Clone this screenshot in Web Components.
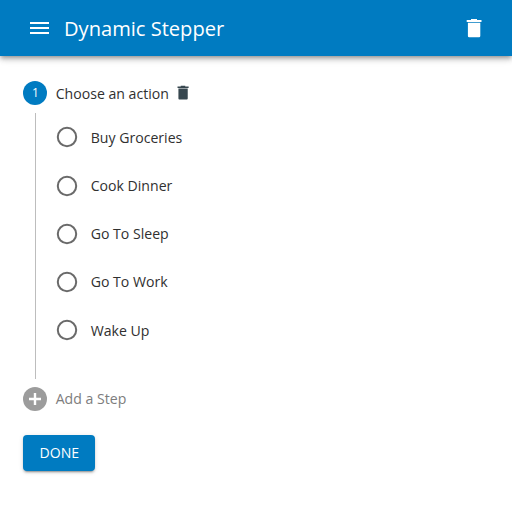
<!DOCTYPE html>
<html lang="en">
<head>
<meta charset="utf-8">
<title>Dynamic Stepper</title>
<style>
html,body{margin:0;background:#fff}
body{font-family:"Open Sans",sans-serif;font-size:14.100px;color:#303030;height:516px;overflow:hidden}
</style>
</head>
<body>
<stepper-page></stepper-page>
<script>
function define(name, html) {
  const t = document.createElement('template');
  t.innerHTML = html;
  customElements.define(name, class extends HTMLElement {
    constructor() {
      super();
      this.attachShadow({mode: 'open'}).append(t.content.cloneNode(true));
    }
  });
}

define('trash-icon', `
<style>:host{display:block;width:16px;height:20px}svg{display:block;width:100%;height:100%}</style>
<svg viewBox="0 0 16 20" fill="currentColor"><path d="M5 1h6v1H15.500v2.100H.700V2H5z"/><path d="M1.900 4.800h12.400V18a1.200 1.200 0 0 1-1.200 1.200H3.100a1.200 1.200 0 0 1-1.200-1.200z"/></svg>`);

define('app-bar', `
<style>
:host{display:flex;align-items:center;box-sizing:border-box;height:56px;padding:0 30px;background:#007bc1;color:#fff;
box-shadow:0 2px 4px -1px rgba(0,0,0,.3),0 4px 5px rgba(0,0,0,.14),0 1px 10px rgba(0,0,0,.12)}
svg{width:19px;height:14px;display:block}
h1{margin:0 0 0 15px;flex:1;font-size:20.100px;line-height:32px;font-weight:400;padding-top:2px}
</style>
<svg viewBox="0 0 19 14" fill="#fff"><path d="M0 1h19v2H0zM0 6h19v2H0zM0 11h19v2H0z"/></svg>
<h1><slot></slot></h1><trash-icon></trash-icon>`);

define('step-label', `
<style>
:host{display:flex;align-items:center;height:24px}
.badge{width:24px;height:24px;flex:none;margin-right:8.300px}
.t{line-height:20px;white-space:nowrap;padding-top:1px}
</style>
<div class="badge"><slot name="icon"></slot></div><span class="t"><slot></slot></span><slot name="action"></slot>`);

define('step-number', `
<style>:host{display:flex;align-items:center;justify-content:center;width:24px;height:24px;border-radius:50%;background:#007bc1;color:#fff;font-size:12px;line-height:24px}</style>
<slot></slot>`);

define('add-icon', `
<style>:host,svg{display:block;width:24px;height:24px}</style>
<svg viewBox="0 0 24 24"><circle cx="12" cy="12" r="12" fill="#9c9c9c"/><path d="M12 6v12M6 12h12" stroke="#fff" stroke-width="2.400"/></svg>`);

define('radio-option', `
<style>
:host{display:flex;align-items:center;height:48.200px}
svg{width:22px;height:22px;margin-right:13px;flex:none}
</style>
<svg viewBox="0 0 22 22"><circle cx="11" cy="11" r="9.200" fill="none" stroke="#6a6a6a" stroke-width="2"/></svg><span><slot></slot></span>`);

define('step-body', `
<style>:host{display:block;box-sizing:border-box;margin:8px 0 8px 12px;height:265.500px;border-left:1px solid #bdbdbd;padding-left:19.300px}</style>
<slot></slot>`);

define('done-button', `
<style>:host{display:flex;align-items:center;justify-content:center;width:72px;height:36px;border-radius:4px;background:#007bc1;color:#fff;margin-top:24px;
box-shadow:0 3px 1px -2px rgba(0,0,0,.2),0 2px 2px rgba(0,0,0,.14),0 1px 5px rgba(0,0,0,.12)}</style>
<slot></slot>`);

define('stepper-page', `
<style>
:host{display:block}
main{padding:25.300px 23.400px}
.small{width:12px;height:15px;color:#37474f;margin-left:8px;margin-top:-1px}
.muted{color:#7d7d7d}
</style>
<app-bar>Dynamic Stepper</app-bar>
<main>
<step-label><step-number slot="icon">1</step-number>Choose an action<trash-icon class="small" slot="action"></trash-icon></step-label>
<step-body>
<radio-option>Buy Groceries</radio-option>
<radio-option>Cook Dinner</radio-option>
<radio-option>Go To Sleep</radio-option>
<radio-option>Go To Work</radio-option>
<radio-option>Wake Up</radio-option>
</step-body>
<step-label class="muted"><add-icon slot="icon"></add-icon>Add a Step</step-label>
<done-button>DONE</done-button>
</main>`);
</script>
</body>
</html>
